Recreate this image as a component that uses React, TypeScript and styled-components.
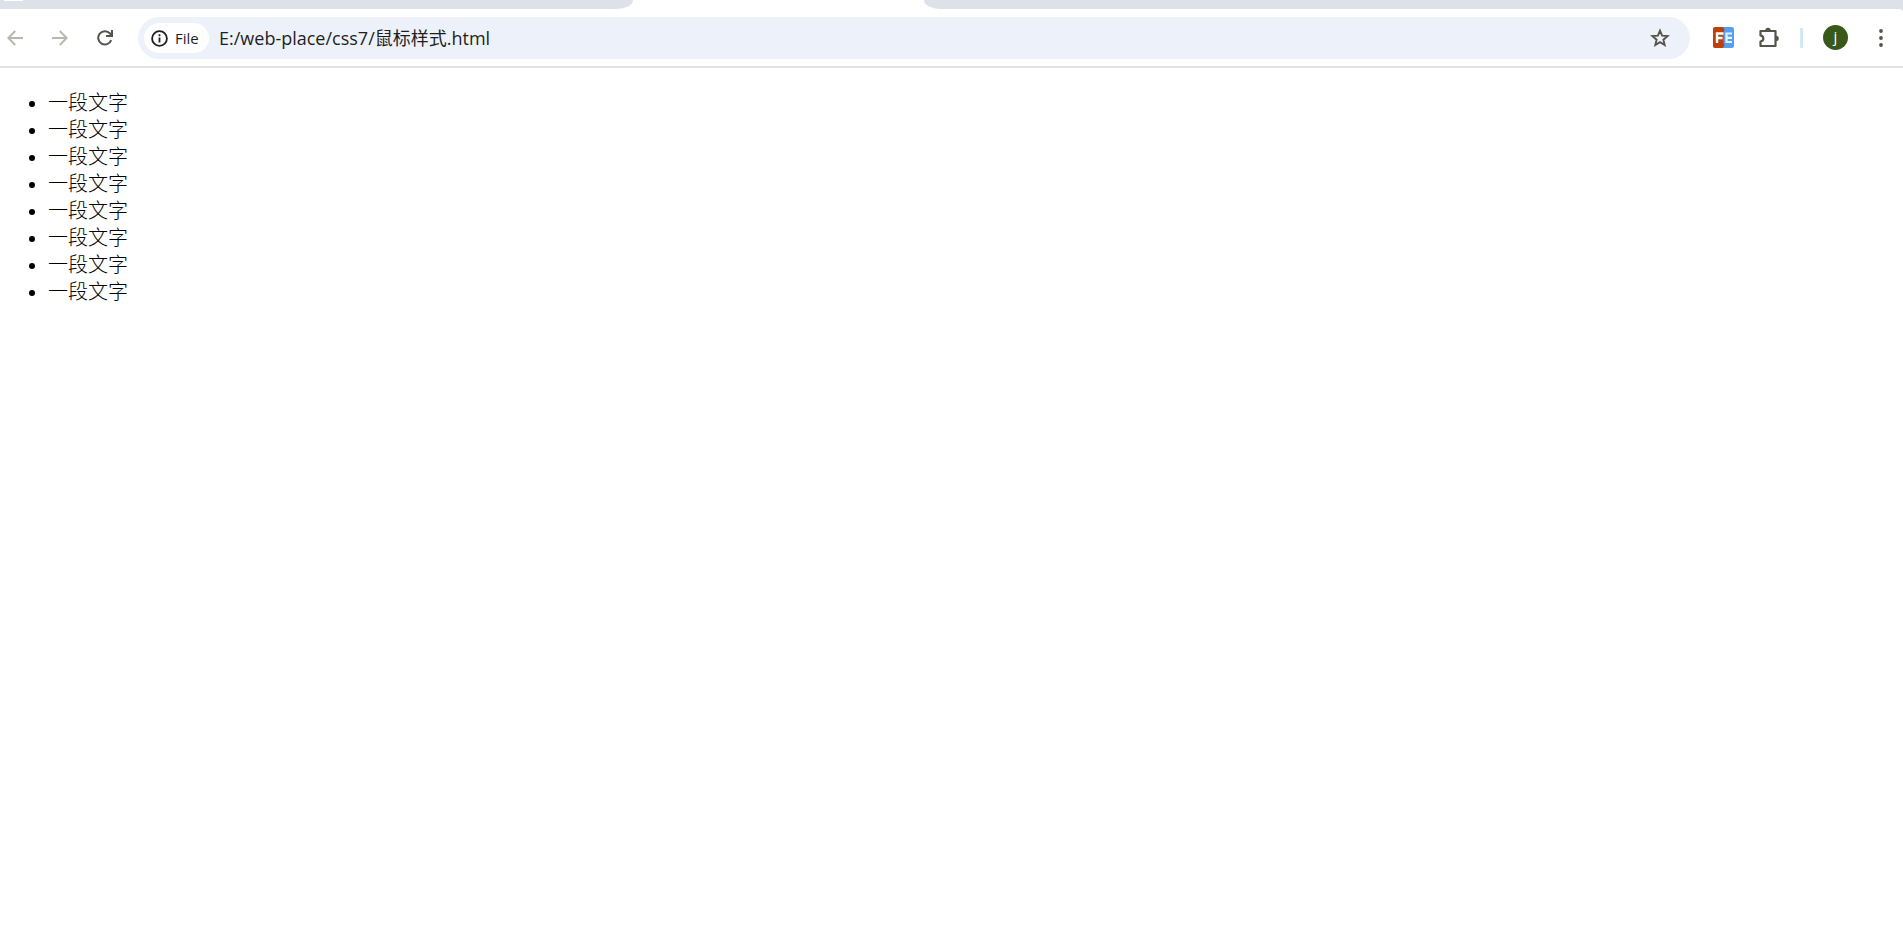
import React from "react";
import styled, { createGlobalStyle } from "styled-components";

const GlobalStyle = createGlobalStyle`
  * { box-sizing: border-box; }
  body { margin: 0; background: #fff; }
`;

const uiFont = `"Open Sans", "Noto Sans CJK SC", sans-serif`;

const Chrome = styled.header`
  background: #dde2ea;
  border-bottom: 2px solid #e1e1e1;
`;

const TabStrip = styled.div`
  display: flex;
  height: 9px;
  background: #fff;
`;

const InactiveTabs = styled.div<{ $side: "left" | "right" }>`
  flex: ${(p) => (p.$side === "left" ? "0 0 633px" : "1")};
  background: #dde2ea;
  border-radius: ${(p) => (p.$side === "left" ? "0 0 16px 0 / 0 0 9px 0" : "0 0 0 16px / 0 0 0 9px")};
`;

const TabIconEdge = styled.div`
  width: 19px;
  height: 1px;
  margin-left: 4px;
  background: #fff;
`;

const ActiveTab = styled.div`
  flex: 0 0 291px;
`;

const Toolbar = styled.div`
  display: flex;
  align-items: center;
  height: 57px;
  padding: 0 11px 0 4px;
  background: #fff;
  border-top-right-radius: 4px;
`;

const Nav = styled.nav`
  display: flex;
  gap: 23px;
  margin-right: 22px;
`;

const IconButton = styled.button<{ $color?: string }>`
  display: grid;
  place-items: center;
  flex: none;
  width: 22px;
  height: 22px;
  padding: 0;
  border: 0;
  background: transparent;
  color: ${(p) => p.$color ?? "#55544a"};
  svg { display: block; }
`;

const AddressBar = styled.form`
  display: flex;
  align-items: center;
  flex: 1;
  height: 42px;
  padding: 0 19px 0 6px;
  border-radius: 21px;
  background: #edf2fa;
`;

const SiteChip = styled.button`
  display: flex;
  align-items: center;
  gap: 7px;
  height: 30px;
  width: 65px;
  padding: 1px 0 0 7px;
  border: 0;
  border-radius: 15px;
  background: #fff;
  color: #1f1f1f;
  font: 15px/20px ${uiFont};
`;

const AddressInput = styled.input`
  flex: 1;
  min-width: 0;
  height: 30px;
  margin-left: 10px;
  padding: 0;
  border: 0;
  outline: 0;
  background: transparent;
  color: #1f1f1f;
  font: 18px/30px ${uiFont};
`;

const Actions = styled.div`
  display: flex;
  align-items: center;
  margin-left: 22px;
`;

const ActionGroup = styled.div`
  display: flex;
  gap: 24px;
`;

const Divider = styled.span`
  width: 3px;
  height: 20px;
  margin: 0 20px;
  border-radius: 1px;
  background: #d3e8f6;
`;

const Avatar = styled.button`
  width: 25px;
  height: 25px;
  margin-right: 22px;
  padding: 0 0 3px;
  border: 0;
  border-radius: 50%;
  background: #38591a;
  color: #fff;
  font: 15px/22px ${uiFont};
`;

const Page = styled.main`
  padding: 22px 8px;
`;

const List = styled.ul`
  margin: 0;
  padding-left: 40px;
  color: #000;
  font: 300 20px/27px "Liberation Serif", "Noto Sans CJK SC", sans-serif;
`;

const items = Array.from({ length: 8 }, () => "一段文字");

export default function App() {
  return (
    <>
      <GlobalStyle />
      <Chrome>
        <TabStrip>
          <InactiveTabs $side="left">
            <TabIconEdge />
          </InactiveTabs>
          <ActiveTab />
          <InactiveTabs $side="right" />
        </TabStrip>
        <Toolbar>
          <Nav>
            <IconButton aria-label="Back" $color="#b9b8ae">
              <svg width="16" height="16" viewBox="0 0 16 16" fill="none" stroke="currentColor" strokeWidth="2">
                <path d="M16 8H2M8.2 1L1.4 8l6.8 7" />
              </svg>
            </IconButton>
            <IconButton aria-label="Forward" $color="#b9b8ae">
              <svg width="16" height="16" viewBox="0 0 16 16" fill="none" stroke="currentColor" strokeWidth="2">
                <path d="M0 8h14M7.8 1l6.8 7-6.8 7" />
              </svg>
            </IconButton>
            <IconButton aria-label="Reload">
              <svg width="16" height="16" viewBox="0 0 16 16" fill="none" stroke="currentColor" strokeWidth="2">
                <path d="M14.2 10.2A6.7 6.7 0 1 1 13 3.5l1.4 1.8" />
                <path d="M15 0v6H9" />
              </svg>
            </IconButton>
          </Nav>
          <AddressBar onSubmit={(e) => e.preventDefault()}>
            <SiteChip type="button">
              <svg width="17" height="17" viewBox="0 0 17 17" fill="none" stroke="currentColor" strokeWidth="1.8">
                <circle cx="8.5" cy="8.5" r="7.4" />
                <path d="M8.5 7.5v5M8.5 4.3v1.9" />
              </svg>
              File
            </SiteChip>
            <AddressInput aria-label="Address" defaultValue="E:/web-place/css7/鼠标样式.html" />
            <IconButton type="button" aria-label="Bookmark this page">
              <svg width="20" height="20" viewBox="0 0 20 20" fill="none" stroke="currentColor" strokeWidth="1.9">
                <path d="M10 2.6l2.1 5 5.5.5-4.2 3.6 1.3 5.4-4.7-2.9-4.7 2.9 1.3-5.4-4.2-3.6 5.5-.5z" />
              </svg>
            </IconButton>
          </AddressBar>
          <Actions>
            <ActionGroup>
              <IconButton aria-label="FE Helper">
                <svg width="21" height="21" viewBox="0 0 21 21">
                  <rect width="21" height="21" rx="2.5" fill="#539ff2" />
                  <path d="M2.5 0H10l1.5 2.5L10.5 6v10l1 2-1.5 3H2.5A2.5 2.5 0 0 1 0 18.5v-16A2.5 2.5 0 0 1 2.5 0z" fill="#bd400a" />
                  <path d="M4 16V6.5h6.5M4 11h5.5" fill="none" stroke="#fff" strokeWidth="2.4" />
                  <path d="M19 6.5h-5.5V15H19M13.5 10.8H19" fill="none" stroke="#e4f2ff" strokeWidth="2.2" />
                </svg>
              </IconButton>
              <IconButton aria-label="Extensions">
                <svg width="22" height="22" viewBox="0 0 22 22">
                  <path d="M2.5 4h15v15h-15v-4.4c3.8-1 3.8-5.2 0-6.2z" fill="none" stroke="currentColor" strokeWidth="2.2" strokeLinejoin="round" />
                  <path d="M7.3 3.5a2.7 2.7 0 0 1 5.4 0zM18 8.7a2.8 2.8 0 0 1 0 5.6z" fill="currentColor" />
                </svg>
              </IconButton>
            </ActionGroup>
            <Divider />
            <Avatar aria-label="Profile">j</Avatar>
            <IconButton aria-label="Menu">
              <svg width="4" height="18" viewBox="0 0 4 18" fill="currentColor">
                <circle cx="2" cy="2" r="1.9" />
                <circle cx="2" cy="9" r="1.9" />
                <circle cx="2" cy="16" r="1.9" />
              </svg>
            </IconButton>
          </Actions>
        </Toolbar>
      </Chrome>
      <Page>
        <List>
          {items.map((text, i) => (
            <li key={i}>{text}</li>
          ))}
        </List>
      </Page>
    </>
  );
}
